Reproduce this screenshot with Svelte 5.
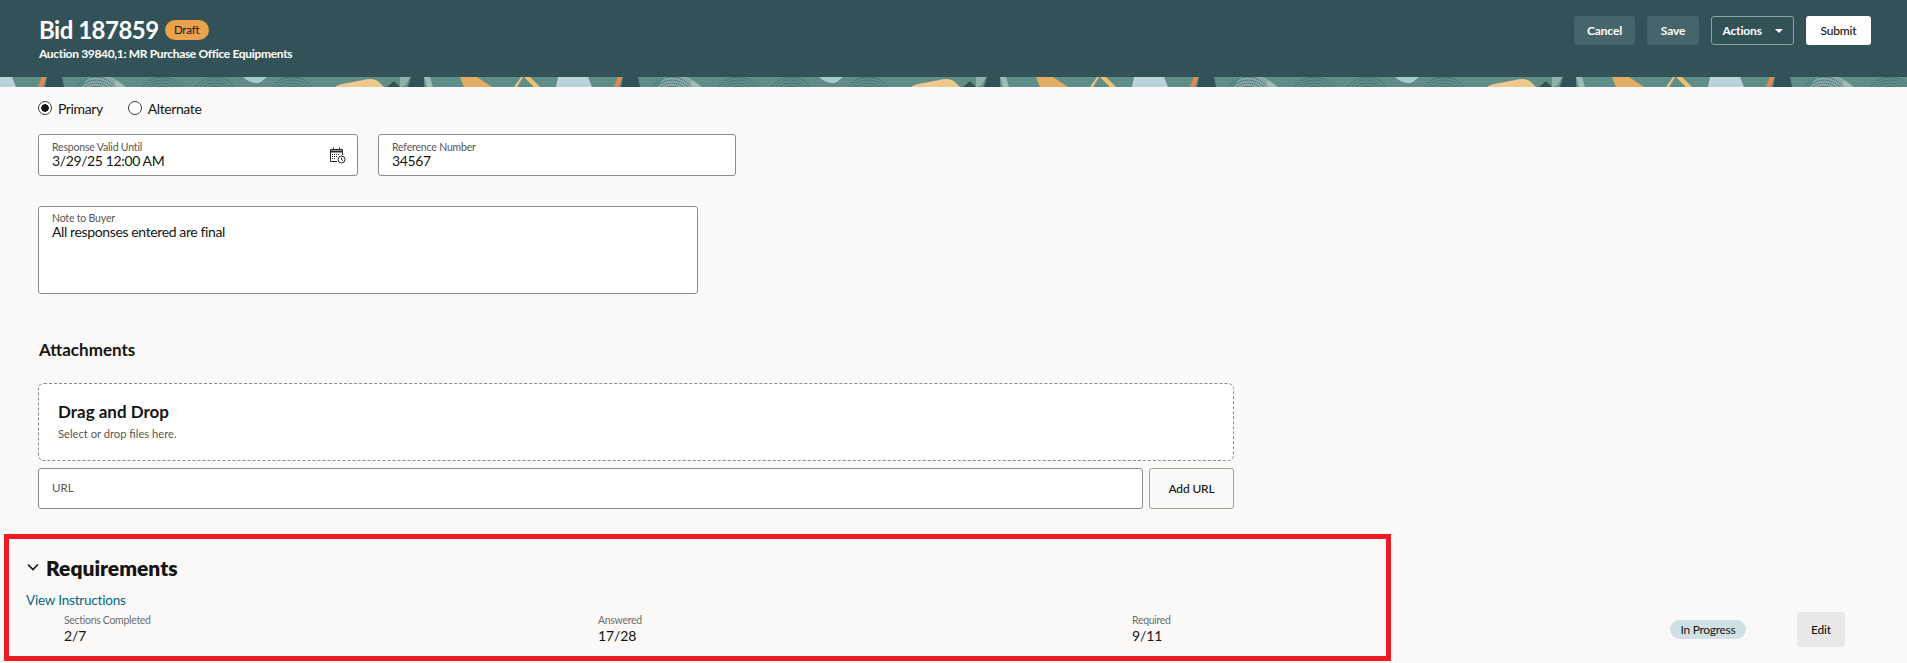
<script>
  const stats = [
    { label: "Sections Completed", value: "2/7" },
    { label: "Answered", value: "17/28" },
    { label: "Required", value: "9/11" }
  ];

  // fingerprint swirls in the banner tile
  const swirls = [96, 162, 215, 292];
  const rings = [6, 9, 12, 15, 18, 21, 24];
  const hatch = Array.from({ length: 14 }, (_, i) => 84 + i * 2.2);
</script>

<div class="page">
  <header class="topbar">
    <div class="titles">
      <div class="title-row">
        <h1>Bid 187859</h1>
        <span class="draft">Draft</span>
      </div>
      <p class="subtitle">Auction 39840,1: MR Purchase Office Equipments</p>
    </div>
    <div class="actions">
      <button class="btn-dark">Cancel</button>
      <button class="btn-dark">Save</button>
      <button class="btn-outline">Actions <span class="caret"></span></button>
      <button class="btn-white">Submit</button>
    </div>
  </header>

  <svg class="strip" width="100%" height="10" aria-hidden="true">
    <defs>
      <pattern id="tile" width="576" height="10" patternUnits="userSpaceOnUse">
        <rect width="576" height="10" fill="#5f8e88" />
        <path d="M0 0h12l4 10H0zM556 10l2-10h18v10z" fill="#b9d3d8" />
        <path d="M47 0h15l2 10H45z" fill="#2f5158" />
        <path d="M41.5 0h5l-3.500 10h-5z" fill="#e0894a" />
        <path d="M82 10l6-10h24l14 10z" fill="#9dbdbd" />
        {#each hatch as x}
          <path d="M{x} 10l4-10" stroke="#5a8080" stroke-width=".7" />
        {/each}
        {#each swirls as cx}
          {#each rings as r}
            <circle {cx} cy="24" {r} fill="none" stroke="#3f666a" stroke-width=".7" />
          {/each}
        {/each}
        <path d="M243 0h24l-6 5c-6 3-12 0-18-5z" fill="#a9c8c9" />
        <path d="M335 10c4-3 12-4 18-5 6-1 12-3 18-3 6 0 9 4 13 8z" fill="#ecc98e" />
        <path d="M387 10l7-6 6 6z" fill="#2f5158" />
        <path d="M400 0h10l-4 8-6 2z" fill="#8fb0ad" />
        <path d="M411 0h13v10h-16z" fill="#2f5158" />
        <path d="M424 0h6l3 10h-6z" fill="#9cbcba" />
        <path d="M460 0h17l15 10h-28z" fill="#e2ac62" />
        <path d="M514 10l7-10h2l-6 10z" fill="#e5c98e" />
        <path d="M524 0h6l10 10h-6z" fill="#edc26e" />
      </pattern>
    </defs>
    <rect width="100%" height="10" fill="url(#tile)" />
  </svg>

  <main class="form">
    <div class="radios">
      <label class="radio"><span class="dot on"></span>Primary</label>
      <label class="radio"><span class="dot"></span>Alternate</label>
    </div>

    <div class="field-row">
      <div class="field date">
        <span class="lbl">Response Valid Until</span>
        <span class="val">3/29/25 12:00 AM</span>
        <svg class="cal" width="17" height="17" viewBox="0 0 17 17" fill="none" stroke="#2b2a28">
          <path d="M8 14.500H1.500V2.500h12V8" />
          <path d="M1.500 4.500h12" stroke-width="2" />
          <path d="M4.500 .5v2.500M10.500 .5v2.500" />
          <path d="M3 7.500h7M3 9.500h5M3 11.500h4" stroke-dasharray="1 1" />
          <circle cx="12.500" cy="12.500" r="3.500" />
          <path d="M12.500 10.500v2l1.500 1" />
        </svg>
      </div>
      <div class="field ref">
        <span class="lbl">Reference Number</span>
        <span class="val">34567</span>
      </div>
    </div>

    <div class="field note">
      <span class="lbl">Note to Buyer</span>
      <span class="val">All responses entered are final</span>
    </div>

    <h2 class="att-title">Attachments</h2>

    <div class="drop">
      <h3>Drag and Drop</h3>
      <p>Select or drop files here.</p>
    </div>

    <div class="url-row">
      <div class="url-input">URL</div>
      <button class="add-url">Add URL</button>
    </div>
  </main>

  <section class="req">
    <div class="req-head">
      <svg width="12" height="8" viewBox="0 0 12 8" fill="none" stroke="#161513" stroke-width="1.6"><path d="M1 1.500l5 5 5-5" /></svg>
      <h2>Requirements</h2>
    </div>
    <a class="link" href="#top">View Instructions</a>
    <div class="stats">
      {#each stats as s}
        <div class="stat">
          <span class="stat-lbl">{s.label}</span>
          <span class="stat-val">{s.value}</span>
        </div>
      {/each}
      <span class="progress">In Progress</span>
      <button class="edit">Edit</button>
    </div>
    <div class="callout"></div>
  </section>
</div>

<style>
  :global(body) {
    margin: 0;
    background: #fbf9f8;
  }

  .page {
    position: relative;
    height: 663px;
    overflow: hidden;
    font-family: "Lato", "Noto Sans", sans-serif;
    color: #161513;
    background: #fbf9f8;
  }

  button {
    font-family: inherit;
    font-weight: 700;
    font-size: 12px;
    letter-spacing: -0.15px;
    height: 29px;
    border-radius: 3px;
    cursor: pointer;
  }

  .topbar {
    display: flex;
    justify-content: space-between;
    height: 77px;
    box-sizing: border-box;
    padding: 16px 36px 0 39px;
    background: #335258;
    color: #fff;
  }

  .title-row {
    display: flex;
    align-items: center;
    gap: 6px;
    height: 28px;
  }

  h1 {
    margin: 0;
    font-size: 24px;
    font-weight: 700;
    line-height: 28px;
    letter-spacing: -0.5px;
  }

  .draft {
    box-sizing: border-box;
    width: 44px;
    height: 20px;
    border-radius: 10px;
    background: #eca24c;
    color: #161513;
    font-size: 11.5px;
    line-height: 20px;
    text-align: center;
    letter-spacing: -0.2px;
  }

  .subtitle {
    margin: 2px 0 0;
    font-size: 12px;
    font-weight: 700;
    line-height: 16px;
    letter-spacing: -0.33px;
  }

  .actions {
    display: flex;
    gap: 12px;
    height: 29px;
  }

  .btn-dark {
    border: 0;
    background: #466469;
    color: #fff;
    padding: 0;
    width: 61px;
  }

  .btn-dark + .btn-dark {
    width: 52px;
  }

  .btn-outline {
    width: 83px;
    padding: 0;
    border: 1px solid #8ba3a5;
    background: transparent;
    color: #fff;
  }

  .caret {
    display: inline-block;
    margin-left: 10px;
    vertical-align: 2px;
    border-left: 4px solid transparent;
    border-right: 4px solid transparent;
    border-top: 4px solid #fff;
  }

  .btn-white {
    width: 65px;
    border: 0;
    background: #fff;
    color: #161513;
    padding: 0;
    font-weight: 500;
  }

  .strip {
    display: block;
  }

  .form {
    padding: 12px 0 0 38px;
  }

  .radios {
    display: flex;
    gap: 25px;
    height: 18px;
    align-items: center;
  }

  .radio {
    display: flex;
    align-items: center;
    gap: 6px;
    font-size: 14px;
    letter-spacing: -0.4px;
  }

  .dot {
    box-sizing: border-box;
    width: 14px;
    height: 14px;
    border: 1px solid #3c3a38;
    border-radius: 50%;
    background: #fff;
  }

  .dot.on {
    background: radial-gradient(circle, #161513 0 3.500px, #fff 4px);
  }

  .field-row {
    display: flex;
    gap: 20px;
    margin-top: 17px;
  }

  .field {
    position: relative;
    box-sizing: border-box;
    display: flex;
    flex-direction: column;
    padding: 7px 13px 0;
    background: #fff;
    border: 1px solid #8d8b88;
    border-radius: 3px;
  }

  .date {
    width: 320px;
    height: 42px;
  }

  .ref {
    width: 358px;
    height: 42px;
  }

  .note {
    width: 660px;
    height: 88px;
    margin-top: 30px;
    padding-top: 6px;
  }

  .lbl {
    font-size: 10.5px;
    line-height: 11px;
    color: #575553;
    letter-spacing: -0.18px;
  }

  .val {
    font-size: 14px;
    line-height: 16px;
    letter-spacing: -0.38px;
  }

  .cal {
    position: absolute;
    right: 11px;
    top: 12px;
  }

  .att-title {
    margin: 46px 0 0 1px;
    font-size: 17px;
    font-weight: 700;
    line-height: 20px;
  }

  .drop {
    box-sizing: border-box;
    width: 1196px;
    height: 78px;
    margin-top: 23px;
    padding: 18px 19px 0;
    background: #fff;
    border: 1px dashed #8d8b88;
    border-radius: 6px;
  }

  .drop h3 {
    margin: 0;
    font-size: 17px;
    font-weight: 700;
    line-height: 20px;
  }

  .drop p {
    margin: 4px 0 0;
    font-size: 11.2px;
    line-height: 16px;
    color: #575553;
  }

  .url-row {
    display: flex;
    gap: 6px;
    width: 1196px;
    margin-top: 7px;
  }

  .url-input {
    flex: 1;
    box-sizing: border-box;
    height: 41px;
    padding: 10px 13px;
    background: #fff;
    border: 1px solid #8d8b88;
    border-radius: 3px;
    font-size: 11.5px;
    line-height: 17px;
    color: #575553;
  }

  .add-url {
    width: 85px;
    height: 41px;
    border: 1px solid #a3a19e;
    background: #fbf9f8;
    color: #161513;
    font-weight: 500;
  }

  .req {
    position: relative;
    margin-top: 25px;
    padding: 18px 26px 0;
  }

  .req-head {
    display: flex;
    align-items: center;
    gap: 7px;
    height: 30px;
    margin-left: 1px;
  }

  .req-head h2 {
    margin: 0;
    font-size: 21px;
    font-weight: 800;
  }

  .link {
    display: block;
    margin-top: 9px;
    font-size: 13.5px;
    line-height: 18px;
    color: #00688c;
    text-decoration: none;
    letter-spacing: -0.2px;
  }

  .stats {
    display: flex;
    align-items: center;
    height: 35px;
    margin-top: 3px;
    margin-right: 36px;
    padding-left: 38px;
  }

  .stat {
    display: flex;
    flex-direction: column;
    width: 534px;
  }

  .stat-lbl {
    font-size: 10.5px;
    line-height: 13px;
    color: #6f6d6a;
    letter-spacing: -0.3px;
  }

  .stat-val {
    font-size: 14px;
    line-height: 18px;
    letter-spacing: -0.1px;
  }

  .progress {
    box-sizing: border-box;
    margin-left: auto;
    width: 76px;
    height: 19px;
    border-radius: 10px;
    background: #d0e1e6;
    font-size: 12px;
    line-height: 19px;
    text-align: center;
    letter-spacing: -0.3px;
  }

  .edit {
    width: 48px;
    height: 35px;
    margin-left: 51px;
    border: 0;
    background: #e9e8e6;
    color: #161513;
    border-radius: 3px;
    font-weight: 500;
  }

  /* annotation box drawn over the section */
  .callout {
    position: absolute;
    left: 4px;
    top: 0;
    width: 1387px;
    height: 127px;
    box-sizing: border-box;
    border: 5px solid #ed1c24;
    pointer-events: none;
  }
</style>
